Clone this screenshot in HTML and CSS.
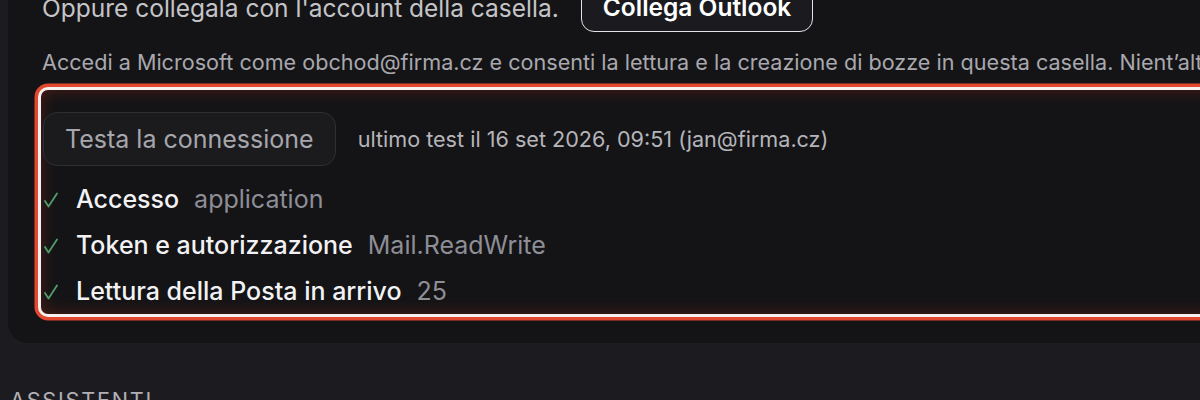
FILE: index.html
```html
<!DOCTYPE html>
<html lang="it">
<head>
<meta charset="utf-8">
<link rel="stylesheet" href="styles.css">
</head>
<body>
<div class="page">
  <section class="card">
    <div class="connect-row">
      <span class="connect-text">Oppure collegala con l'account della casella.</span>
      <button class="btn-outlook">Collega Outlook</button>
    </div>
    <p class="hint">Accedi a Microsoft come obchod@firma.cz e consenti la lettura e la creazione di bozze in questa casella. Nient’altro verrà letto o inviato senza la tua conferma.</p>
    <div class="test-box">
      <div class="test-head">
        <button class="btn-test">Testa la connessione</button>
        <span class="last-test">ultimo test il 16 set 2026, 09:51 (jan@firma.cz)</span>
      </div>
      <ul class="checks">
        <li class="check"><svg class="tick" viewBox="0 0 14 16" width="14" height="16"><polyline points="1,9 4.5,14.5 13,1.5"/></svg><span class="label">Accesso</span><span class="value">application</span></li>
        <li class="check"><svg class="tick" viewBox="0 0 14 16" width="14" height="16"><polyline points="1,9 4.5,14.5 13,1.5"/></svg><span class="label">Token e autorizzazione</span><span class="value">Mail.ReadWrite</span></li>
        <li class="check"><svg class="tick" viewBox="0 0 14 16" width="14" height="16"><polyline points="1,9 4.5,14.5 13,1.5"/></svg><span class="label">Lettura della Posta in arrivo</span><span class="value">25</span></li>
      </ul>
    </div>
  </section>
  <h2 class="section-title">Assistenti</h2>
</div>
</body>
</html>
```

FILE: styles.css
```css
* { box-sizing: border-box; }
html, body { margin: 0; padding: 0; }
body {
  background: #1c1c20;
  font-family: Inter, "Noto Sans", sans-serif;
  overflow: hidden;
  width: 1200px;
  height: 400px;
}
.page {
  padding-left: 8px;
  width: 1400px;
}
.card {
  margin-top: -19px;
  background: #141416;
  border-radius: 0 0 20px 20px;
  padding: 0 0 29px 34px;
}
.connect-row {
  display: flex;
  align-items: center;
  gap: 22px;
}
.connect-text {
  font-size: 24.5px;
  color: #c4c4c8;
  padding-top: 3px;
}
.btn-outlook {
  height: 50px;
  padding: 0 21px;
  background: #1b1b1f;
  border: 1.5px solid #e4e4e6;
  border-radius: 13px;
  color: #ffffff;
  font-family: inherit;
  font-size: 24.5px;
  font-weight: 600;
  margin-top: 1px;
}
.hint {
  margin: 16px 0 0;
  font-size: 21.6px;
  line-height: 28px;
  color: #a8a8ae;
  white-space: nowrap;
}
.test-box {
  margin: 14px 40px 0 -1px;
  border-radius: 7px;
  background: #141416;
  box-shadow:
    0 0 0 3px #f6f1ef,
    0 0 0 6.5px #e2482f,
    inset 0 0 16px rgba(150, 40, 25, 0.45);
  padding: 22px 0 8px 2px;
}
.test-head {
  display: flex;
  align-items: center;
  gap: 22px;
}
.btn-test {
  height: 54px;
  padding: 0 21px;
  background: #1b1b1e;
  border: 1px solid #2e2e33;
  border-radius: 14px;
  color: #a6a6ad;
  font-family: inherit;
  font-size: 25px;
}
.last-test {
  font-size: 21.6px;
  color: #b4b4ba;
}
.checks {
  list-style: none;
  margin: 18px 0 0;
  padding: 0;
  display: flex;
  flex-direction: column;
  gap: 16px;
}
.check {
  display: flex;
  align-items: center;
  height: 30px;
  font-size: 25px;
}
.tick {
  margin: 1px 18px 0 1px;
  fill: none;
  stroke: #4f9e6a;
  stroke-width: 1.8;
  stroke-linecap: round;
  stroke-linejoin: round;
}
.label {
  color: #f2f2f4;
  font-weight: 500;
}
.value {
  margin-left: 15px;
  color: #8e8e96;
}
.section-title {
  margin: 44px 0 0 2px;
  font-size: 21.6px;
  font-weight: 400;
  letter-spacing: 1.8px;
  text-transform: uppercase;
  color: #b0b0b6;
}
```
